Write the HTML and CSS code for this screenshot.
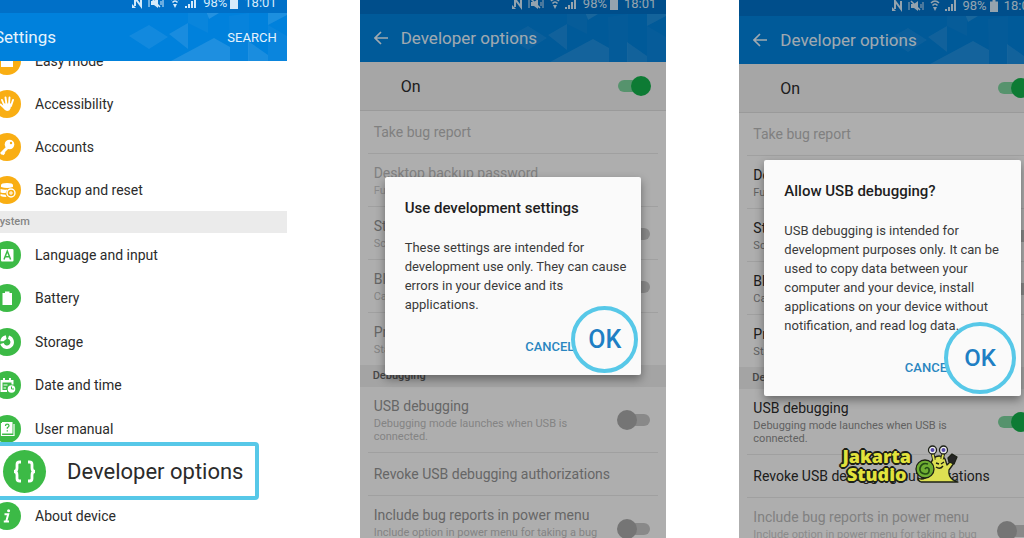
FILE: index.html
```html
<!DOCTYPE html>
<html lang="en">
<head>
    <meta charset="UTF-8">
    <meta name="viewport" content="width=device-width, initial-scale=1.0">
    <title>Enable USB debugging</title>
    <link rel="stylesheet" href="styles.css">
</head>
<body>
    <!-- Shared shapes -->
    <svg class="defs" aria-hidden="true">
        <symbol id="status-icons" viewBox="0 0 66 14">
            <path d="M3 10V2l6 8V2" fill="none" stroke="currentColor" stroke-width="2"/>
            <path d="M0 8l4 4H0z" fill="currentColor"/>
            <path d="M17 3v8M31 3v8M29 5v4" stroke="currentColor" fill="none"/>
            <path d="M19 5h3l4-3v10l-4-3h-3z" fill="currentColor"/>
            <path d="M19 2l9 9" stroke="currentColor" stroke-width="1.5"/>
            <path d="M39 4q4-4 8 0M40.500 6.500q2.500-3 5 0" fill="none" stroke="currentColor" stroke-width="1.600"/>
            <path d="M41 8h4l-2 4z" fill="currentColor"/>
            <path d="M53 12v-2h2v2zM56 12V8h2v4zM59 12V5h2v7zM62 12V1h2v11z" fill="currentColor"/>
        </symbol>
        <symbol id="battery" viewBox="0 0 8 12">
            <path d="M0 1.500h2.500V0h3v1.500H8V12H0z" fill="currentColor"/>
        </symbol>
        <symbol id="pattern" viewBox="0 0 160 48">
            <g fill="#fff">
                <path d="M2 23l20-11 19 12-19 12z" opacity=".1"/>
                <path d="M42 21l19-11v26z" opacity=".14"/>
                <path d="M61 0h20v20L61 10z" opacity=".05"/>
                <path d="M44 48l43-23 16 9v14z" opacity=".17"/>
                <path d="M80 0h12l-10 6z" opacity=".2"/>
                <path d="M102 3l20-3v48h-19z" opacity=".04"/>
                <path d="M121 28l20 14v6h-20z" opacity=".15"/>
                <path d="M141 0h19v2l-19 10z" opacity=".16"/>
                <path d="M141 12l19 11v25h-19z" opacity=".06"/>
            </g>
        </symbol>
        <symbol id="back" viewBox="0 0 14 14">
            <path d="M14 7H1.500M7 1L1 7l6 6" fill="none" stroke="currentColor" stroke-width="1.700"/>
        </symbol>
    </svg>

    <main class="stage">
        <!-- Settings list -->
        <section class="phone phone-settings">
            <div class="status">
                <svg class="status-icons" aria-hidden="true"><use href="#status-icons"/></svg>
                <span>98%</span>
                <svg class="battery" aria-hidden="true"><use href="#battery"/></svg>
                <span class="time">18:01</span>
            </div>
            <header class="header">
                <svg class="pattern" aria-hidden="true"><use href="#pattern"/></svg>
                <h1>Settings</h1>
                <button type="button" class="search">SEARCH</button>
            </header>
            <ul class="menu menu-personal">
                <li><a href="#" class="item">
                    <svg class="icon orange" viewBox="0 0 28 28"><path d="M8 14h4v-3h4v3h4v6H8z" fill="#fff"/></svg>
                    Easy mode</a></li>
                <li><a href="#" class="item">
                    <svg class="icon orange" viewBox="0 0 28 28">
                        <path d="M9 10l2.500 6M12.500 7.500l1 7M16.500 7.500l-.5 7M20 10l-2 6M7.500 14.500l4.500 4" stroke="#fff" stroke-width="1.900" stroke-linecap="round"/>
                        <path d="M11 13.500h7.500l-1 5q-.8 2.500-3.500 2.500-2 0-3.500-3z" fill="#fff"/>
                    </svg>
                    Accessibility</a></li>
                <li><a href="#" class="item">
                    <svg class="icon orange" viewBox="0 0 28 28">
                        <path d="M14.500 14.500L8 21M9.500 19.500l2 1.500" stroke="#fff" stroke-width="3"/>
                        <circle cx="16.500" cy="11.500" r="4.800" fill="#fff"/>
                        <circle cx="18" cy="10" r="1.200" fill="#f9ae13"/>
                    </svg>
                    Accounts</a></li>
                <li><a href="#" class="item">
                    <svg class="icon orange" viewBox="0 0 28 28">
                        <path d="M8 9q0-2 6-2t6 2v2q-6 2-12 0zM7.500 13q3 1 7 .6l-2 3.400q-3 0-5-.6zM7.500 18q2 .8 5 .8l1 2.200q-4 0-6-1z" fill="#fff"/>
                        <circle cx="18" cy="17" r="4" fill="none" stroke="#fff" stroke-width="1.400"/>
                        <path d="M18 15v4M16 17h4" stroke="#fff"/>
                    </svg>
                    Backup and reset</a></li>
            </ul>
            <h2 class="section">System</h2>
            <ul class="menu menu-system">
                <li><a href="#" class="item">
                    <svg class="icon green" viewBox="0 0 28 28">
                        <rect x="8" y="8" width="12.500" height="12.500" rx="1" fill="#fff"/>
                        <path d="M11 18.500l3.300-8.500 3.300 8.500M12 15.700h4.500" fill="none" stroke="#3cba46" stroke-width="1.500"/>
                    </svg>
                    Language and input</a></li>
                <li><a href="#" class="item">
                    <svg class="icon green" viewBox="0 0 28 28"><path d="M9.500 9H12V7.500h4.500V9H19v12H9.500z" fill="#fff"/></svg>
                    Battery</a></li>
                <li><a href="#" class="item">
                    <svg class="icon green" viewBox="0 0 28 28">
                        <path d="M15.500 9.100A5.200 5.200 0 1 1 9 15.500" fill="none" stroke="#fff" stroke-width="3.500"/>
                        <path d="M7.300 13.300q.5-5 5.500-6l.8 3.500-3 2.500z" fill="#fff"/>
                    </svg>
                    Storage</a></li>
                <li><a href="#" class="item">
                    <svg class="icon green" viewBox="0 0 28 28">
                        <path d="M14 20H8.500V10h11v3.500M8 10.500h12M11 7v3M17 7v3" fill="none" stroke="#fff" stroke-width="2"/>
                        <path d="M10.500 14h4M10.500 17h2.500" stroke="#fff"/>
                        <circle cx="18.500" cy="18" r="3.800" fill="#fff"/>
                        <path d="M18.500 15.500V18H21" fill="none" stroke="#3cba46"/>
                    </svg>
                    Date and time</a></li>
                <li><a href="#" class="item">
                    <svg class="icon green" viewBox="0 0 28 28">
                        <path d="M9 7h10.500v11.500H9z" fill="#fff"/>
                        <path d="M8.500 8v12.500H21V9" fill="none" stroke="#fff" stroke-width="1.200"/>
                        <path d="M12.500 11q0-1.800 1.700-1.800 1.800 0 1.800 1.600 0 1-1.700 2v1M14.300 15.200v1.300" fill="none" stroke="#3cba46" stroke-width="1.300"/>
                    </svg>
                    User manual</a></li>
                <li class="highlight"><a href="#" class="item">
                    <svg class="icon green" viewBox="0 0 43 43">
                        <path d="M18 12h-1.500q-2.500 0-2.500 2.500V18q0 3.500-3 3.500 3 0 3 3.500v3.500q0 2.500 2.500 2.500H18M25 12h1.500q2.500 0 2.500 2.500V18q0 3.500 3 3.500-3 0-3 3.500v3.500q0 2.500-2.500 2.500H25" fill="none" stroke="#fff" stroke-width="2.800"/>
                    </svg>
                    Developer options</a></li>
                <li><a href="#" class="item">
                    <svg class="icon green" viewBox="0 0 28 28">
                        <path d="M11.500 12.300h3.700l-2 7.200h2.800M10.800 19.500h2.500" fill="none" stroke="#fff" stroke-width="2"/>
                        <circle cx="15.600" cy="8.800" r="1.500" fill="#fff"/>
                    </svg>
                    About device</a></li>
            </ul>
        </section>

        <!-- Development settings prompt -->
        <section class="phone phone-options options-off">
            <div class="status">
                <svg class="status-icons" aria-hidden="true"><use href="#status-icons"/></svg>
                <span>98%</span>
                <svg class="battery" aria-hidden="true"><use href="#battery"/></svg>
                <span class="time">18:01</span>
            </div>
            <header class="header">
                <svg class="pattern" aria-hidden="true"><use href="#pattern"/></svg>
                <button type="button" class="back" aria-label="Back"><svg><use href="#back"/></svg></button>
                <h2>Developer options</h2>
            </header>
            <div class="master">
                <label for="master-a">On</label>
                <input type="checkbox" class="toggle" id="master-a" checked>
            </div>
            <div class="row disabled"><span class="title">Take bug report</span></div>
            <div class="row disabled">
                <div class="text"><span class="title">Desktop backup password</span><small>Full desktop backups aren't protected</small></div>
            </div>
            <div class="row">
                <label class="text" for="awake-a"><span class="title">Stay awake</span><small>Screen will never sleep while charging</small></label>
                <input type="checkbox" class="toggle" id="awake-a">
            </div>
            <div class="row">
                <label class="text" for="hci-a"><span class="title">Bluetooth HCI snoop log</span><small>Capture all HCI packets in a file</small></label>
                <input type="checkbox" class="toggle" id="hci-a">
            </div>
            <div class="row last">
                <div class="text"><span class="title">Process stats</span><small>Stats about running processes</small></div>
            </div>
            <h3 class="section">Debugging</h3>
            <div class="row">
                <label class="text" for="usb-a"><span class="title">USB debugging</span><small>Debugging mode launches when USB is connected.</small></label>
                <input type="checkbox" class="toggle" id="usb-a">
            </div>
            <div class="row"><span class="title">Revoke USB debugging authorizations</span></div>
            <div class="row">
                <label class="text" for="power-a"><span class="title">Include bug reports in power menu</span><small>Include option in power menu for taking a bug report.</small></label>
                <input type="checkbox" class="toggle" id="power-a">
            </div>
            <div class="scrim">
                <div class="dialog" role="dialog" aria-labelledby="dialog-a">
                    <h2 id="dialog-a">Use development settings</h2>
                    <p>These settings are intended for development use only. They can cause errors in your device and its applications.</p>
                    <div class="actions">
                        <button type="button" class="cancel">CANCEL</button>
                        <button type="button" class="ok">OK</button>
                    </div>
                </div>
            </div>
        </section>

        <!-- USB debugging prompt -->
        <section class="phone phone-options phone-usb">
            <div class="status">
                <svg class="status-icons" aria-hidden="true"><use href="#status-icons"/></svg>
                <span>98%</span>
                <svg class="battery" aria-hidden="true"><use href="#battery"/></svg>
                <span class="time">18:01</span>
            </div>
            <header class="header">
                <svg class="pattern" aria-hidden="true"><use href="#pattern"/></svg>
                <button type="button" class="back" aria-label="Back"><svg><use href="#back"/></svg></button>
                <h2>Developer options</h2>
            </header>
            <div class="master">
                <label for="master-b">On</label>
                <input type="checkbox" class="toggle" id="master-b" checked>
            </div>
            <div class="row disabled"><span class="title">Take bug report</span></div>
            <div class="row">
                <div class="text"><span class="title">Desktop backup password</span><small>Full desktop backups aren't protected</small></div>
            </div>
            <div class="row">
                <label class="text" for="awake-b"><span class="title">Stay awake</span><small>Screen will never sleep while charging</small></label>
                <input type="checkbox" class="toggle" id="awake-b">
            </div>
            <div class="row">
                <label class="text" for="hci-b"><span class="title">Bluetooth HCI snoop log</span><small>Capture all HCI packets in a file</small></label>
                <input type="checkbox" class="toggle" id="hci-b">
            </div>
            <div class="row last">
                <div class="text"><span class="title">Process stats</span><small>Stats about running processes</small></div>
            </div>
            <h3 class="section">Debugging</h3>
            <div class="row">
                <label class="text" for="usb-b"><span class="title">USB debugging</span><small>Debugging mode launches when USB is connected.</small></label>
                <input type="checkbox" class="toggle" id="usb-b" checked>
            </div>
            <div class="row"><span class="title">Revoke USB debugging authorizations</span></div>
            <div class="row disabled">
                <label class="text" for="power-b"><span class="title">Include bug reports in power menu</span><small>Include option in power menu for taking a bug report.</small></label>
                <input type="checkbox" class="toggle" id="power-b">
            </div>
            <div class="scrim">
                <div class="dialog" role="dialog" aria-labelledby="dialog-b">
                    <h2 id="dialog-b">Allow USB debugging?</h2>
                    <p>USB debugging is intended for development purposes only. It can be used to copy data between your computer and your device, install applications on your device without notification, and read log data.</p>
                    <div class="actions">
                        <button type="button" class="cancel">CANCEL</button>
                        <button type="button" class="ok">OK</button>
                    </div>
                </div>
            </div>
        </section>

        <!-- Watermark -->
        <div class="watermark">
            <div class="brand"><span>Jakarta</span><span>Studio</span></div>
            <svg class="snail" viewBox="0 0 44 40">
                <g stroke="#1d2116" stroke-width="1.300" stroke-linejoin="round">
                    <path d="M3 33q5 3 12-3l1-12q2-7 8-7 6 0 7 6l1 3 4-4 3 2-5 7q-1 6 4 10l5 2H6q-3-1-3-4z" fill="#dde052"/>
                    <path d="M19 15l-2-9M27 14l2-8" stroke="#1d2116" stroke-width="3.500"/>
                    <path d="M19 15l-2-9M27 14l2-8" stroke="#dde052" stroke-width="1.800"/>
                    <circle cx="10" cy="24" r="9" fill="#6fae32"/>
                    <path d="M10 24q2-3 4 0 1 5-4 5-6-1-5-6 2-6 8-4" fill="none" stroke="#244b16" stroke-width="1.700"/>
                    <circle cx="17.500" cy="5" r="4" fill="#eee"/>
                    <circle cx="28.500" cy="5" r="4" fill="#eee"/>
                    <path d="M33 13l4-4 5 3-3 7-5-2z" fill="#252525"/>
                </g>
                <circle cx="17.500" cy="5" r="2" fill="#5548a8"/>
                <circle cx="28.500" cy="5" r="2" fill="#5548a8"/>
                <path d="M21 18l3 1M29 17l-3 2M21 22q4 3 7-1" fill="none" stroke="#1d2116" stroke-width="1.400"/>
            </svg>
        </div>
    </main>
</body>
</html>
```
FILE: styles.css
```css
* {
    box-sizing: border-box;
}
body {
    margin: 0;
    font-family: Roboto, "Liberation Sans", sans-serif;
    background: #fff;
    color: #2b2b2b;
    overflow: hidden;
}
h1, h2, h3, p, ul {
    margin: 0;
    padding: 0;
}
ul {
    list-style: none;
}
button {
    font-family: inherit;
    border: none;
    background: none;
    padding: 0;
    cursor: pointer;
}
.defs {
    display: none;
}

/* Three screens side by side, the outer ones run off the edges */
.stage {
    position: relative;
    display: flex;
    gap: 73px;
    height: 100vh;
    margin: 0 -22px 0 -20px;
    overflow: hidden;
}
.phone {
    position: relative;
    flex: 1 1 0;
    min-width: 0;
    margin-top: -10px;
    display: flex;
    flex-direction: column;
    background: #fafafa;
    overflow: hidden;
}
.phone > * {
    flex-shrink: 0;
}
.phone-settings {
    margin-top: -11px;
    background: #fff;
}
.phone-usb {
    margin-top: -8px;
}

/* Bars */
.status {
    display: flex;
    align-items: center;
    justify-content: flex-end;
    height: 24px;
    padding: 4px 10px 0 0;
    background: #0070c8;
    color: #d4eafa;
    font-size: 13px;
    line-height: 20px;
}
.status-icons {
    width: 66px;
    height: 14px;
    margin-right: 5px;
}
.battery {
    width: 8px;
    height: 12px;
    margin: 0 6px 0 3px;
}
.header {
    position: relative;
    z-index: 1;
    display: flex;
    align-items: center;
    height: 48px;
    padding: 0 10px 0 14px;
    background: #0081dc;
    color: #e6f3fc;
}
.header h1, .header h2 {
    position: relative;
    font-size: 17px;
    font-weight: 400;
    line-height: 24px;
}
.pattern {
    position: absolute;
    right: 0;
    top: 0;
    width: 160px;
    height: 48px;
    opacity: 0.7;
}
.search {
    position: relative;
    margin-left: auto;
    color: #e6f3fc;
    font-size: 13px;
}
.back {
    width: 14px;
    height: 14px;
    margin-right: 13px;
    color: #e6f3fc;
}
.back svg {
    display: block;
    width: 14px;
    height: 14px;
}
.section {
    padding: 0 13px;
    background: #ebebeb;
    color: #858585;
    font-size: 11px;
    font-weight: 500;
    line-height: 22px;
}

/* Settings menu */
.menu-personal {
    margin-top: -22px;
}
.menu-personal li {
    height: 43px;
}
.phone .menu-system {
    flex: 1;
    display: grid;
    grid-auto-rows: 1fr;
}
.item {
    display: flex;
    align-items: center;
    gap: 14px;
    height: 100%;
    padding-left: 13px;
    color: #2b2b2b;
    font-size: 14px;
    text-decoration: none;
}
.icon {
    flex: none;
    width: 28px;
    height: 28px;
    border-radius: 50%;
    fill: none;
}
.orange {
    background: #f9ae13;
}
.green {
    background: #3cba46;
}
.highlight {
    position: relative;
    z-index: 1;
    margin: -9px 28px -6px 0;
    background: #fff;
    border: 4px solid #57c8e8;
    border-radius: 4px;
}
.highlight .item {
    gap: 21px;
    padding-left: 19px;
    font-size: 22px;
}
.highlight .icon {
    width: 43px;
    height: 43px;
}

/* Developer options */
.master {
    display: flex;
    align-items: center;
    justify-content: space-between;
    height: 49px;
    padding: 0 15px 0 41px;
    background: #eee;
    border-bottom: 1px solid #ddd;
    font-size: 16px;
}
.row {
    display: flex;
    align-items: center;
    justify-content: space-between;
    margin: 0 8px;
    padding: 10px 7px 9px 6px;
    border-bottom: 1px solid #e6e6e6;
}
.row.last {
    border-bottom: none;
}
.row > .title {
    padding: 2px 0 3px;
}
.title {
    display: block;
    font-size: 14px;
    line-height: 18px;
}
.text {
    max-width: 226px;
}
.row small {
    display: block;
    margin-top: 2px;
    color: #8c8c8c;
    font-size: 11px;
    line-height: 13px;
}
.options-off .title {
    color: #939393;
}
.options-off small {
    color: #bdbdbd;
}
.phone .disabled .title {
    color: #b8b8b8;
}
.phone .disabled small {
    color: #c8c8c8;
}
.phone-options .section {
    color: #666;
}
.toggle {
    appearance: none;
    position: relative;
    flex: none;
    width: 34px;
    height: 20px;
    margin: 0;
}
.toggle::before {
    content: "";
    position: absolute;
    left: 4px;
    top: 4px;
    width: 29px;
    height: 12px;
    border-radius: 6px;
    background: #c4c4c4;
}
.toggle::after {
    content: "";
    position: absolute;
    left: 0;
    top: 0;
    width: 20px;
    height: 20px;
    border-radius: 50%;
    background: #a8a8a8;
}
.toggle:checked::before {
    left: 1px;
    background: #7cd39d;
}
.toggle:checked::after {
    left: 14px;
    background: #14b14b;
}

/* Dialogs */
.scrim {
    position: absolute;
    z-index: 2;
    top: 0;
    right: 0;
    bottom: -24px;
    left: 0;
    display: flex;
    align-items: center;
    padding: 0 25px;
    background: rgba(0, 0, 0, 0.3);
}
.phone-usb .scrim {
    bottom: -26px;
}
.dialog {
    position: relative;
    flex: 1;
    padding: 20px 8px 18px 20px;
    background: #fafafa;
    border-radius: 2px;
    box-shadow: 0 4px 10px rgba(0, 0, 0, 0.4);
}
.dialog h2 {
    color: #1e1e1e;
    font-size: 15px;
    font-weight: 500;
    line-height: 22px;
}
.dialog p {
    margin-top: 19px;
    color: #3a3a3a;
    font-size: 13px;
    line-height: 19px;
}
.actions {
    display: flex;
    justify-content: flex-end;
    margin-top: 23px;
    padding-right: 59px;
}
.cancel {
    color: #2a86c0;
    font-size: 13px;
    font-weight: 500;
    line-height: 20px;
}
.ok {
    position: absolute;
    right: 3px;
    bottom: 2px;
    width: 67px;
    height: 67px;
    border: 4px solid #57c8e8;
    border-radius: 50%;
    background: #fafafa;
    color: #1f7fc4;
    font-size: 25px;
    font-weight: 500;
}
.phone-usb .ok {
    right: 5px;
    width: 72px;
    height: 72px;
    font-size: 24px;
}

/* Watermark */
.watermark {
    position: absolute;
    z-index: 3;
    right: 87px;
    bottom: 53px;
    display: flex;
    align-items: center;
    gap: 4px;
}
.brand {
    display: flex;
    flex-direction: column;
    align-items: center;
    color: #e2e33c;
    font-family: "Open Sans", "Noto Sans", sans-serif;
    font-size: 18px;
    font-weight: 800;
    line-height: 18px;
    text-shadow: 1px 1px 0 #1d2116, -1px -1px 0 #1d2116, 1px -1px 0 #1d2116, -1px 1px 0 #1d2116, 2px 0 0 #1d2116, -2px 0 0 #1d2116, 0 2px 0 #1d2116, 0 -2px 0 #1d2116;
}
.snail {
    width: 44px;
    height: 40px;
}
```
